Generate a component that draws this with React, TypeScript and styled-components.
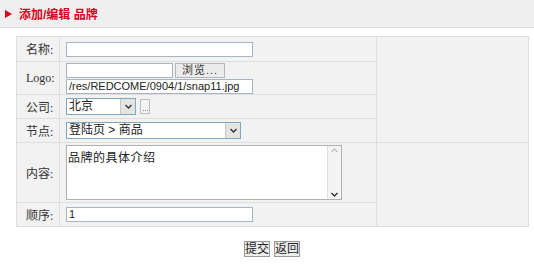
import React from "react";
import styled, { createGlobalStyle } from "styled-components";

const Global = createGlobalStyle`
  body {
    margin: 0;
    background: #ffffff;
    font-family: "Liberation Sans", "Noto Sans CJK SC", sans-serif;
    font-size: 12px;
    color: #222;
  }
`;

const Page = styled.div`
  width: 534px;
  height: 264px;
  overflow: hidden;
`;

const TitleBar = styled.div`
  height: 27px;
  background: #efefef;
  border-bottom: 1px solid #dddddd;
  display: flex;
  align-items: center;
  padding-left: 5px;
  gap: 7px;
  color: #d8001c;
  font-weight: bold;
  font-size: 12px;
`;

const Arrow = styled.span`
  width: 0;
  height: 0;
  border-top: 4px solid transparent;
  border-bottom: 4px solid transparent;
  border-left: 7px solid #d8001c;
`;

const FormGrid = styled.div`
  margin: 8px 0 0 16px;
  width: 511px;
  display: grid;
  grid-template-columns: 42px 316px 151px;
  grid-template-rows: 24px 32px 23px 23px 59px 23px;
  gap: 1px;
  padding: 1px;
  background: #dedede;
`;

const Cell = styled.div<{ $row?: string; $col?: string }>`
  background: #f2f2f2;
  display: flex;
  align-items: center;
  grid-row: ${(p) => p.$row || "auto"};
  grid-column: ${(p) => p.$col || "auto"};
`;

const Label = styled(Cell)`
  padding-left: 9px;
  color: #333;
  font-family: "Liberation Serif", "Noto Sans CJK SC", serif;
  font-size: 12px;
`;

const Field = styled(Cell)`
  padding-left: 6px;
  gap: 3px;
`;

const Stack = styled(Field)`
  flex-direction: column;
  align-items: flex-start;
  justify-content: center;
  gap: 1px;
`;

const TextBox = styled.div<{ $w: number }>`
  width: ${(p) => p.$w}px;
  height: 15px;
  box-sizing: border-box;
  background: #fff;
  border: 1px solid #a8b4c4;
  font-size: 11px;
  line-height: 13px;
  padding-left: 2px;
  color: #222;
  white-space: nowrap;
  overflow: hidden;
`;

const Row = styled.div`
  display: flex;
  gap: 2px;
  align-items: center;
`;

const GrayButton = styled.div<{ $w: number }>`
  width: ${(p) => p.$w}px;
  height: 15px;
  box-sizing: border-box;
  background: #ececec;
  border: 1px solid #b5b5b5;
  font-size: 11px;
  line-height: 13px;
  text-align: center;
  letter-spacing: 1px;
  color: #333;
`;

const Select = styled.div<{ $w: number }>`
  width: ${(p) => p.$w}px;
  height: 17px;
  box-sizing: border-box;
  background: #fff;
  border: 1px solid #7fa6c0;
  display: flex;
  align-items: stretch;
  font-size: 12px;
`;

const SelectText = styled.span`
  flex: 1;
  line-height: 15px;
  padding-left: 2px;
  white-space: nowrap;
  overflow: hidden;
`;

const SelectArrow = styled.span`
  width: 14px;
  background: #e4e4e4;
  border-left: 1px solid #c8c8c8;
  display: flex;
  align-items: center;
  justify-content: center;
`;

const SmallButton = styled.div`
  width: 10px;
  height: 15px;
  box-sizing: border-box;
  border: 1px solid #bbb;
  background: #f4f4f4;
  display: flex;
  align-items: flex-end;
  justify-content: center;
  gap: 1px;
  padding-bottom: 2px;
  margin-left: 1px;
`;

const Dot = styled.span`
  width: 1px;
  height: 1px;
  background: #888;
`;

const TextArea = styled.div`
  width: 276px;
  height: 55px;
  box-sizing: border-box;
  background: #fff;
  border: 1px solid #b0b0b0;
  display: flex;
  font-size: 12px;
  letter-spacing: 0.5px;
`;

const AreaText = styled.span`
  flex: 1;
  padding: 2px 0 0 1px;
`;

const ScrollBar = styled.span`
  width: 13px;
  background: #f4f4f4;
  border-left: 1px solid #e0e0e0;
  display: flex;
  flex-direction: column;
  justify-content: space-between;
  align-items: center;
  padding: 2px 0;
`;

const Footer = styled.div`
  display: flex;
  justify-content: center;
  gap: 4px;
  margin-top: 14px;
  padding-left: 10px;
`;

const SubmitButton = styled.div`
  width: 26px;
  height: 16px;
  box-sizing: border-box;
  border: 1px solid #999;
  background: #eeeeee;
  font-size: 12px;
  line-height: 14px;
  text-align: center;
  color: #222;
`;

const Chevron = ({ up }: { up?: boolean }) => (
  <svg width="7" height="5" viewBox="0 0 7 5">
    <path
      d={up ? "M0.5 4 L3.5 1 L6.5 4" : "M0.5 1 L3.5 4 L6.5 1"}
      fill="none"
      stroke={up ? "#c0c0c0" : "#333"}
      strokeWidth="1.4"
    />
  </svg>
);

export default function App() {
  return (
    <Page>
      <Global />
      <TitleBar>
        <Arrow />
        <span>添加/编辑 品牌</span>
      </TitleBar>
      <FormGrid>
        <Label>名称:</Label>
        <Field>
          <TextBox $w={187} />
        </Field>
        <Cell $row="1 / span 4" $col="3" />

        <Label>Logo:</Label>
        <Stack>
          <Row>
            <TextBox $w={107} />
            <GrayButton $w={50}>浏览...</GrayButton>
          </Row>
          <TextBox $w={187}>/res/REDCOME/0904/1/snap11.jpg</TextBox>
        </Stack>

        <Label>公司:</Label>
        <Field>
          <Select $w={70}>
            <SelectText>北京</SelectText>
            <SelectArrow>
              <Chevron />
            </SelectArrow>
          </Select>
          <SmallButton>
            <Dot />
            <Dot />
            <Dot />
          </SmallButton>
        </Field>

        <Label>节点:</Label>
        <Field>
          <Select $w={175}>
            <SelectText>登陆页 &gt; 商品</SelectText>
            <SelectArrow>
              <Chevron />
            </SelectArrow>
          </Select>
        </Field>

        <Label>内容:</Label>
        <Field>
          <TextArea>
            <AreaText>品牌的具体介绍</AreaText>
            <ScrollBar>
              <Chevron up />
              <Chevron up={false} />
            </ScrollBar>
          </TextArea>
        </Field>
        <Cell $row="5 / span 2" $col="3" />

        <Label>顺序:</Label>
        <Field>
          <TextBox $w={187}>1</TextBox>
        </Field>
      </FormGrid>
      <Footer>
        <SubmitButton>提交</SubmitButton>
        <SubmitButton>返回</SubmitButton>
      </Footer>
    </Page>
  );
}
